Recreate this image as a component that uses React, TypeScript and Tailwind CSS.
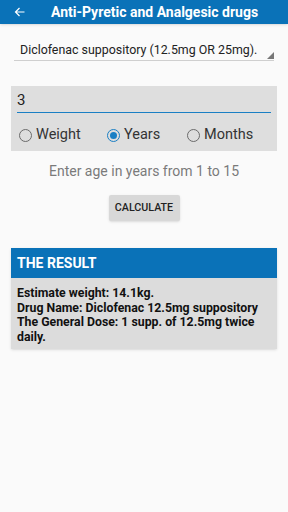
import { useState } from 'react';

type Unit = 'weight' | 'years' | 'months';

function Radio({ label, checked, onClick }: { label: string; checked: boolean; onClick: () => void }) {
  return (
    <button type="button" onClick={onClick} className="flex items-center gap-[4px]">
      <span
        className={`flex h-[13px] w-[13px] items-center justify-center rounded-full border-[1.5px] ${
          checked ? 'border-[#1a7fc4]' : 'border-[#6b6b6b]'
        }`}
      >
        {checked && <span className="h-[7px] w-[7px] rounded-full bg-[#1a7fc4]" />}
      </span>
      <span className="text-[14.5px] text-[#333]">{label}</span>
    </button>
  );
}

export default function App() {
  const [age, setAge] = useState('3');
  const [unit, setUnit] = useState<Unit>('years');

  return (
    <div className="flex h-[512px] w-[288px] flex-col bg-[#fafafa] font-['Roboto',sans-serif]">
      {/* Toolbar */}
      <header className="flex h-[24px] items-center bg-[#0a72b8] shadow-sm">
        <svg className="ml-[14px] h-[12px] w-[12px]" viewBox="0 0 24 24" fill="none" stroke="white" strokeWidth="2.4">
          <path d="M21 12H4M11 4l-8 8 8 8" />
        </svg>
        <h1 className="ml-[25px] text-[14px] font-bold text-white">Anti-Pyretic and Analgesic drugs</h1>
      </header>

      {/* Drug spinner */}
      <div className="mx-[14px] mt-[16px] flex h-[21px] items-center border-b border-[#cfcfcf] pl-[6px]">
        <span className="text-[12.4px] text-[#222]">Diclofenac suppository (12.5mg OR 25mg).</span>
        <svg className="ml-auto mt-[10px] h-[7px] w-[7px]" viewBox="0 0 8 8">
          <path d="M8 0V8H0Z" fill="#777" />
        </svg>
      </div>

      {/* Input panel */}
      <div className="mx-[11px] mt-[25px] bg-[#dedede] px-[6px] pb-[2px] pt-[6px]">
        <div className="flex h-[21px] items-end border-b-[1.5px] border-[#1a7fc4] pb-[1px]">
          <input
            value={age}
            onChange={(e) => setAge(e.target.value)}
            className="w-full bg-transparent text-[15px] text-[#222] caret-[#1a7fc4] outline-none"
          />
        </div>
        <div className="ml-[2px] mt-[8px] flex h-[28px] items-center">
          <div className="w-[88px]"><Radio label="Weight" checked={unit === 'weight'} onClick={() => setUnit('weight')} /></div>
          <div className="w-[80px]"><Radio label="Years" checked={unit === 'years'} onClick={() => setUnit('years')} /></div>
          <Radio label="Months" checked={unit === 'months'} onClick={() => setUnit('months')} />
        </div>
      </div>

      <p className="mt-[10px] text-center text-[14px] text-[#7a7a7a]">Enter age in years from 1 to 15</p>

      <div className="mt-[13px] flex justify-center">
        <button type="button" className="h-[26px] w-[71px] rounded-[2px] bg-[#d8d8d8] text-[10.7px] font-medium text-[#222] shadow-sm">
          CALCULATE
        </button>
      </div>

      {/* Result */}
      <div className="mx-[11px] mt-[27px] bg-[#dcdcdc] shadow-sm">
        <div className="flex h-[30px] items-center bg-[#0a72b8] px-[6px]">
          <span className="text-[14px] font-bold text-white">THE RESULT</span>
        </div>
        <div className="px-[6px] pb-[5px] pt-[8px] text-[12.3px] font-bold leading-[14.5px] text-[#111]">
          <p>Estimate weight: 14.1kg.</p>
          <p>Drug Name: Diclofenac 12.5mg suppository</p>
          <p>The General Dose: 1 supp. of 12.5mg twice daily.</p>
        </div>
      </div>
    </div>
  );
}
